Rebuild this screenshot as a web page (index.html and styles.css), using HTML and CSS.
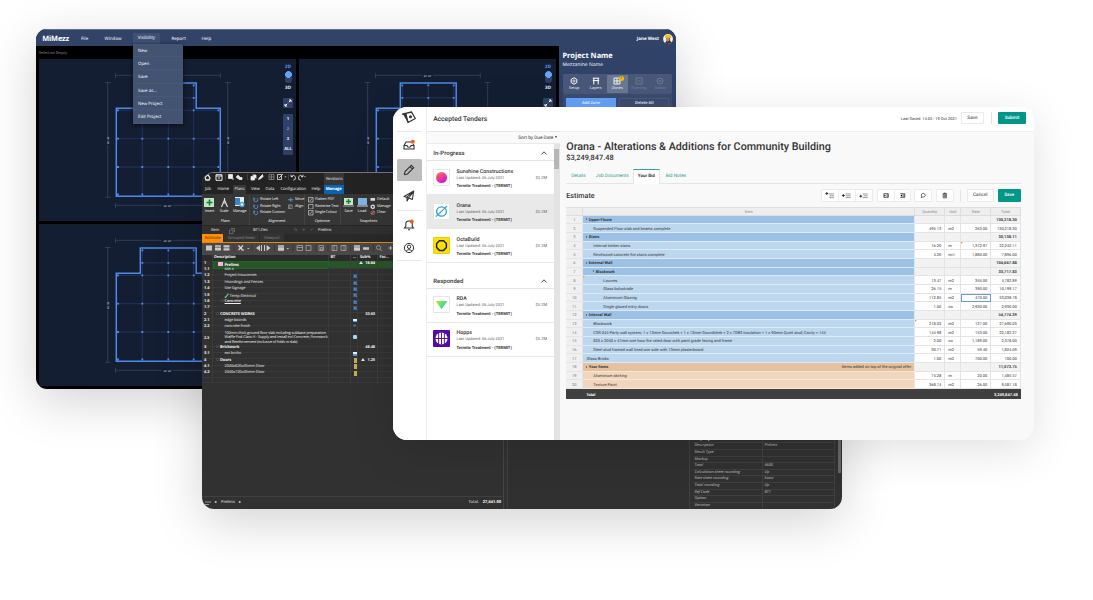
FILE: index.html
```
<!DOCTYPE html>
<html lang="en">
<head>
<meta charset="utf-8">
<title>Product suite</title>
<link rel="stylesheet" href="styles.css">
</head>
<body>
<svg class="defs" aria-hidden="true">
  <symbol id="plan" viewBox="0 0 257 162">
    <g stroke="#3d4a63" stroke-width=".7" fill="none">
      <path d="M76.5 16.3H123M134 16.3H181M76.5 14V19M181.3 14V19M76.5 146.3H123M134 146.3H181M76.5 144V149M181.3 144V149M68.7 23.5V76M68.7 86V138.3M66 23.5H71.5M66 138.3H71.5M188.7 23.5V76M188.7 86V138.3M186 23.5H191.5M186 138.3H191.5"/>
    </g>
    <g stroke="#22335a" stroke-width="1" fill="none">
      <path d="M103.3 26V136M129.3 26V136M154.7 26V136M103 38.8H155M78 51.3H180M78 79.7H180M78 108H180"/>
    </g>
    <path d="M101.3 24.1H157.2V49.3H181.3V137.3H77.3V49.3H101.3Z" fill="none" stroke="#4f8ae6" stroke-width="1.5"/>
    <path d="M103.3 26.3H103.31M129.3 26.3H129.31M154.7 26.3H154.71M103.3 38.8H103.31M129.3 38.8H129.31M154.7 38.8H154.71M79 51.3H79.01M103.3 51.3H103.31M129.3 51.3H129.31M154.7 51.3H154.71M179.3 51.3H179.31M79 79.7H79.01M103.3 79.7H103.31M129.3 79.7H129.31M154.7 79.7H154.71M179.3 79.7H179.31M79 108H79.01M103.3 108H103.31M129.3 108H129.31M154.7 108H154.71M179.3 108H179.31M79 135.5H79.01M103.3 135.5H103.31M129.3 135.5H129.31M154.7 135.5H154.71M179.3 135.5H179.31" stroke="#4f8fee" stroke-width="1.8" stroke-linecap="square"/>
    <g class="plan-label"><text x="124.5" y="17.5">40' 40"</text><text x="124.5" y="147.5">40' 40"</text><text transform="translate(69.7 85) rotate(-90)">40' 40"</text><text transform="translate(189.7 85) rotate(-90)">40' 40"</text></g>
  </symbol>
  <symbol id="expand" viewBox="0 0 10 10"><path d="M5.8 4.2L8 2M6 2h2v2M4.2 5.8L2 8M2 6v2h2" fill="none" stroke="#fff" stroke-width="1"/></symbol>
  <symbol id="up" viewBox="0 0 8 6"><path d="M1.6 4.3L4 1.8l2.4 2.5" fill="none" stroke="#333" stroke-width=".9"/></symbol>
  <symbol id="rot" viewBox="0 0 6 6"><path d="M1.6 1.3A2.2 2.2 0 1 0 4.4 1.2M1 .6v1.5h1.5" fill="none" stroke="#5f9fd0" stroke-width=".9"/></symbol>
  <symbol id="calc" viewBox="0 0 5 5"><rect x=".3" y=".3" width="4.4" height="4.4" fill="#2a5f92"/><path d="M.8 1.4h1.6M.8 3.6L4 1.2M2.8 3.7h1.4" stroke="#8fc6ef" stroke-width=".6"/></symbol>
</svg>

<main class="desktop">

<section class="window mezz">
  <header class="mezz-nav">
    <strong class="mezz-logo">MiMezz</strong>
    <nav class="mezz-menu">
      <span class="m-file">File</span><span class="m-window">Window</span>
      <div class="m-vis">Visibility
        <ul class="dropdown"><li>New</li><li>Open</li><li>Save</li><li>Save as...</li><li>New Project</li><li>Edit Project</li></ul>
      </div>
      <span class="m-report">Report</span><span>Help</span>
    </nav>
    <div class="mezz-user">Jane West
      <svg width="10" height="10" viewBox="0 0 10 10"><circle cx="5" cy="5" r="4.9" fill="#f3f3f3"/><path d="M2 9.2L3.4 7 3 4h4l.2 3L9 8.600Q5 11 2 9.200z" fill="#3b3531"/><ellipse cx="4.800" cy="5.300" rx="1.700" ry="2.300" fill="#c69070"/><path d="M1.800 3.700Q2 .300 5 .400T8.500 4z" fill="#f5bd16"/></svg>
    </div>
  </header>
  <div class="mezz-body">
    <div class="mezz-work">
      <div class="selection">Selection Empty</div>
      <div class="viewports">
        <div class="viewport"><svg class="plan"><use href="#plan"/></svg>
          <div class="controls"><b class="on">2D</b><i class="toggle"></i><b>3D</b><svg class="expand"><use href="#expand"/></svg><div class="levels"><b>1</b><b class="on">2</b><b>3</b><b>ALL</b></div></div></div>
        <div class="viewport"><svg class="plan"><use href="#plan"/></svg>
          <div class="controls"><b class="on">2D</b><i class="toggle"></i><b>3D</b><svg class="expand"><use href="#expand"/></svg></div></div>
        <div class="viewport"><svg class="plan"><use href="#plan"/></svg></div>
        <div class="viewport"><svg class="plan"><use href="#plan"/></svg></div>
      </div>
    </div>
    <aside class="mezz-side">
      <h2>Project Name</h2>
      <p>Mezzanine Name</p>
      <div class="side-tabs">
        <div><svg viewBox="0 0 8 8"><path d="M4 .8l2.800 1.600v3.200L4 7.200 1.200 5.600V2.400z" fill="none" stroke="#fff"/><circle cx="4" cy="4" r="1.100" fill="none" stroke="#fff" stroke-width=".7"/></svg>Setup</div>
        <div><svg viewBox="0 0 8 8"><path d="M.8 1.200h6.400M.8 3.600h6.400M1.800 1v6.400M6.200 1v6.400" stroke="#fff" fill="none"/></svg>Layers</div>
        <div class="active"><svg viewBox="0 0 8 8"><path d="M1 1h6v6H1zM4 1v6M1 4h6" stroke="#fff" stroke-width=".9" fill="none"/></svg><em class="badge">!</em>Zones</div>
        <div class="off"><svg viewBox="0 0 8 8"><path d="M1 1h6v6H1zM2.500 4h3" stroke="#fff" stroke-width=".8" fill="none"/></svg>Framing</div>
        <div class="off"><svg viewBox="0 0 8 8"><circle cx="4" cy="4" r="3" stroke="#fff" stroke-width=".8" fill="none"/><path d="M2.500 4h3" stroke="#fff"/></svg>Extras</div>
      </div>
      <div class="side-buttons"><span class="add">Add Zone</span><span>Delete All</span></div>
    </aside>
  </div>
</section>

<section class="window cost">
  <header class="cost-title">
    <svg width="120" height="14" viewBox="0 0 120 14">
      <g fill="#eee" stroke="#eee" stroke-width=".8">
        <path d="M3 4l3-2 2 3-1 2H4z" fill="none" stroke-width="1.300"/><path d="M14 1.700h6v5.600h-6zM14 3h6M16 5h2" fill="none" stroke-width="1"/>
        <path d="M26.500 1.500h4v4h-4zM30 6h2"/><circle cx="36" cy="4" r="1.400"/><path d="M37 4.500h3v2h-3z"/>
        <path d="M49 3.500h3.500v3.500H49zM50.500 2h3.500v3.500"/><path d="M56.500 6.500l1-2 3-3 .5 2-2 2z"/><path d="M67 1.500h5v5h-5zM67 4h5M69.500 1.500v5" fill="none" stroke="#888"/>
        <path d="M75.500 1.500h4v5h-4zM77 5l4-4" fill="none"/><path d="M82.500 3.500h2l-1 1z" stroke="none"/>
        <path d="M89 1.700v2h2M89.300 3.500q3-2.800 4 .4t-2 3.200M101 1.700v2h-2M100.700 3.500q-3-2.800-4 .4t2 3.200" fill="none"/><path d="M102 3.500h2l-1 1z" stroke="none"/>
      </g><path d="M23.500 1v6M45.500 1v6M86.500 1v6" stroke="#555" stroke-width=".6"/>
    </svg>
    <span class="revisions">Revisions</span>
  </header>
  <nav class="cost-tabs"><span>Job</span><span>Home</span><span class="current">Plans</span><span>View</span><span>Data</span><span>Configuration</span><span>Help</span><span class="manage">Manage</span></nav>
  <div class="ribbon">
    <div class="rg g-plans"><div class="tools big">
      <div><svg viewBox="0 0 11 11"><path d="M0 1h10v9H0z" fill="#bfe8c0"/><path d="M5.500 2.500v6M2.500 5.500h6" stroke="#177a3a" stroke-width="1.600"/></svg>Insert</div>
      <div><svg viewBox="0 0 11 11"><path d="M5.500 1v2L2.500 10M5.500 3l3 7M4 6h3" stroke="#ddd" fill="none" stroke-width="1.200"/></svg>Scale</div>
      <div><svg viewBox="0 0 11 11"><path d="M1 0h9v9H1z" fill="#e9eef2"/><path d="M1 1h5v7H1z" fill="#3e83bd"/><circle cx="8" cy="7.500" r="2" fill="none" stroke="#4ba1de" stroke-width="1.300"/></svg>Manage</div>
    </div><small>Plans</small></div>
    <div class="rg g-align"><div class="tools two">
      <div><span><svg><use href="#rot"/></svg>Rotate Left</span><span><svg><use href="#rot"/></svg>Rotate Right</span><span><svg><use href="#rot"/></svg>Rotate Custom</span></div>
      <div><span><svg viewBox="0 0 6 6"><path d="M0 3h6M3 .5v5" stroke="#5c9ac8"/></svg>Move</span><span><svg viewBox="0 0 6 6"><path d="M.5 1h4v4h-4zM2 1v4" stroke="#999" stroke-width=".8" fill="none"/></svg>Align</span></div>
    </div><small>Alignment</small></div>
    <div class="rg g-opt"><div class="tools one"><div>
      <span><svg class="check" viewBox="0 0 6 6"><path d="M.5.500h5v5h-5zM1.500 3l1 1 2-2.500"/></svg>Flatten PDF</span><span><svg class="check" viewBox="0 0 6 6"><path d="M.5.500h5v5h-5z"/></svg>Rasterise Text</span><span><svg class="check" viewBox="0 0 6 6"><path d="M.5.500h5v5h-5zM1.500 3l1 1 2-2.500"/></svg>Single Colour</span></div>
    </div><small>Optimise</small></div>
    <div class="rg g-snap"><div class="tools snap">
      <div class="bigbtn"><svg viewBox="0 0 11 11"><path d="M1 1h9v7H1z" fill="#c6e6c8"/><path d="M5.500 2v5M3 4.500h5" stroke="#177a3a" stroke-width="1.500"/><path d="M0 9h11" stroke="#aaa"/></svg>Save</div>
      <div class="bigbtn"><svg viewBox="0 0 11 11"><path d="M1 1h9v7H1z" fill="#7cb5e6"/><path d="M0 9h11" stroke="#ddd"/></svg>Load</div>
      <div class="stack"><span><svg viewBox="0 0 6 6"><path d="M.5 1h5v3h-5z" fill="#ddd"/></svg>Default</span><span><svg viewBox="0 0 6 6"><circle cx="3" cy="3" r="1.800" fill="none" stroke="#eee" stroke-width="1.300"/></svg>Manage</span><span><svg viewBox="0 0 6 6"><circle cx="3" cy="3" r="2" fill="none" stroke="#d45b53"/><path d="M1.500 4.500l3-3" stroke="#ddd" stroke-width=".7"/></svg>Clear</span></div>
    </div><small>Snapshots</small></div>
  </div>
  <div class="formula"><span>Item</span><svg viewBox="0 0 6 6"><path d="M.5 2h3.500v3.500H.5zM2 .5h3.500V4" stroke="#777" fill="none" stroke-width=".8"/></svg><span class="cell">BT1.Des</span><i>fx</i><i>✕</i><i>✓</i><span class="val">Prelims</span></div>
  <div class="doc-tabs"><span class="est">Estimate</span><span>Grouped Views</span><span>Viewport</span></div>
  <div class="sheet-tools"><svg width="190" height="12" viewBox="0 0 190 12">
    <g fill="#c9c9c9"><path d="M4 2.500h6v5H4zM13 2.200h6v1.600h-6zM13 4.500h6v3h-6zM21.500 2.200h6v2.300h-6zM21.500 5.300h6v2.300h-6z"/><path d="M45 5h2.500l-1.200 1.300z"/><path d="M54 5l4-3v6zM59 2h1v6h-1zM62 2h1v6h-1zM64.500 2l4 3-4 3z"/><path d="M76 2.200h6v1.500h-6zM76 4.200h6v3.500h-6zM84.500 5H87l-1.200 1.300zM152 2.200h6v1.500h-6zM152 4.200h6v3.500h-6zM161 4.200h6v2.600h-6z"/></g>
    <g fill="none" stroke="#a5a5a5" stroke-width=".8"><path stroke="#ddd" stroke-width="1.200" d="M36.500 2.500l4 4.500M41 2.500L36.500 7M39.500 7H42"/><path d="M95 2.500h5.500v5H95zM95 4.500h5.500M104 2.500h5v5h-5zM117 2.500h4.500v5H117zM118.500 4.500h2v2h-2zM130 2.500h5v5h-5zM132 2.500v5M139 2.500h5v5h-5zM142 2.500v5"/><circle cx="176.500" cy="4.500" r="2"/><path d="M178 6l1.800 2"/><path d="M188.500 3v4M186.500 5h4" stroke="#ccc"/></g>
    <path d="M32 1v8M50 1v8M72.500 1v8M91 1v8M114 1v8M126 1v8M148.500 1v8M171.500 1v8" stroke="#333" stroke-width=".7"/>
  </svg></div>
  <div class="cost-main">
    <div class="sheet">
      <div class="sr head"><span></span><span>Description</span><span>BT</span><span>...</span><span>Sub%</span><span>Fac...</span></div>
      <div class="sr green b"><span>1</span><span><i class="flag"></i>Prelims</span><span></span><span></span><span class="n"><u class="warn"></u>16.64</span><span></span></div>
      <div class="sr"><span>1.1</span><span>site a</span><span></span><span></span><span></span><span></span></div>
      <div class="sr"><span>1.2</span><span>Project Insurances</span><span></span><span><svg><use href="#calc"/></svg></span><span></span><span></span></div>
      <div class="sr"><span>1.3</span><span>Hoardings and Fences</span><span></span><span><svg><use href="#calc"/></svg></span><span></span><span></span></div>
      <div class="sr"><span>1.4</span><span>Site Signage</span><span></span><span><svg><use href="#calc"/></svg></span><span></span><span></span></div>
      <div class="sr"><span>1.5</span><span><svg class="brush" viewBox="0 0 6 6"><path d="M.8 4.500l1.200.9L5.300.8" fill="none" stroke="#6ad28c" stroke-width="1.300"/></svg>Temp Electrical</span><span></span><span><svg><use href="#calc"/></svg></span><span></span><span></span></div>
      <div class="sr"><span>1.6</span><span class="under"><i class="tw"></i>Concrete</span><span></span><span><svg><use href="#calc"/></svg></span><span></span><span></span></div>
      <div class="sr"><span>1.7</span><span></span><span></span><span><svg><use href="#calc"/></svg></span><span></span><span></span></div>
      <div class="sr b top"><span>2</span><span><i class="tw"></i>CONCRETE WORKS</span><span></span><span></span><span class="n">33.63</span><span></span></div>
      <div class="sr"><span>2.1</span><span>edge boards</span><span></span><span><i class="tray"></i></span><span></span><span></span></div>
      <div class="sr"><span>2.2</span><span>concrete finish</span><span></span><span class="blue">✕</span><span></span><span></span></div>
      <div class="sr tall"><span>2.3</span><span>100mm thick ground floor slab including subbase preparation<br>Waffle Pod Class H - Supply and install incl Concrete, Formwork<br>and Reinforcement (inclusive of folds in slab)</span><span></span><span><i class="cube"></i></span><span></span><span></span></div>
      <div class="sr b top"><span>3</span><span><i class="tw"></i>Brickwork</span><span></span><span></span><span class="n">48.48</span><span></span></div>
      <div class="sr"><span>3.1</span><span>ext bricks</span><span></span><span><i class="tray"></i></span><span></span><span></span></div>
      <div class="sr b top"><span>4</span><span><i class="tw"></i>Doors</span><span></span><span><i class="door"></i></span><span class="n"><u class="warn"></u>1.25</span><span></span></div>
      <div class="sr"><span>4.1</span><span>2040x820x35mm Door</span><span></span><span><i class="door"></i></span><span></span><span></span></div>
      <div class="sr"><span>4.2</span><span>2040x720x35mm Door</span><span></span><span><i class="door"></i></span><span></span><span></span></div>
      <div class="sr last"><span></span><span></span><span></span><span></span><span></span><span></span></div>
      <footer class="sheet-foot"><svg viewBox="0 0 6 5"><path d="M0 1h6M0 3.500h4" stroke="#999"/></svg><span>▸</span><span>Prelims</span><span>▸</span><span class="tot">Total:</span><b>27,641.00</b></footer>
    </div>
    <div class="middle"></div>
    <div class="props">
      <div class="pr ph"><span>Property</span><span>Value</span></div>
      <div class="pr"><span>Description</span><span>Prelims</span></div>
      <div class="pr"><span>Result Type</span><span></span></div>
      <div class="pr"><span>Markup</span><span></span></div>
      <div class="pr"><span>Total</span><span>4600</span></div>
      <div class="pr"><span>Calculation sheet rounding</span><span>Up</span></div>
      <div class="pr"><span>Rate sheet rounding</span><span>Exact</span></div>
      <div class="pr"><span>Total rounding</span><span>Up</span></div>
      <div class="pr"><span>Ref Code</span><span>BT1</span></div>
      <div class="pr"><span>Option</span><span></span></div>
      <div class="pr"><span>Variation</span><span></span></div>
    </div>
    <div class="track"></div>
  </div>
</section>

<section class="window tender">
  <nav class="rail">
    <div class="brand"><svg width="16" height="15" viewBox="0 0 16 15"><path d="M1.500 3.300L6.500 12l-1-7.500z" fill="#333"/><path d="M1.500 4.200L10.500 2l3.800 6.500L7 12.500 5 4.500z" fill="none" stroke="#333" stroke-width="1.300" stroke-linejoin="round"/><circle cx="9.500" cy="6.700" r="1.500" fill="#333"/></svg></div>
    <div class="ri"><svg viewBox="0 0 12 12"><path d="M1 6.500L3 3h5.500M1 6.500h3q0 1.800 2 1.800t2-1.800h3V10H1zM11 6.500L10 5" fill="none" stroke="#333" stroke-width="1.100"/><circle cx="9.800" cy="2.800" r="2" fill="#ff5a13"/></svg></div>
    <div class="ri active"><svg viewBox="0 0 12 12"><path d="M1.500 10.500l.5-3L8.300 1.300l2.400 2.400L4.500 10zM7 2.600l2.400 2.400" fill="none" stroke="#333" stroke-width="1.100"/></svg></div>
    <div class="ri send"><svg viewBox="0 0 12 12"><path d="M1 6.500L10.800 1 9.300 9.500 5.800 8zM4 7.200V11l1.800-3 5-7-6.800 6.200" fill="none" stroke="#333" stroke-width="1.100" stroke-linejoin="round"/></svg></div>
    <div class="ri bell"><svg viewBox="0 0 12 12"><path d="M1.500 9h9L9.300 7.300V5q0-3-3.300-3T2.800 5v2.300zM5 10.700h2" fill="none" stroke="#333" stroke-width="1.100"/><circle cx="8.700" cy="2.500" r="2" fill="#ff5a13"/></svg></div>
    <div class="ri user"><svg viewBox="0 0 12 12"><circle cx="6" cy="6" r="4.600" fill="none" stroke="#333"/><circle cx="6" cy="4.800" r="1.700" fill="none" stroke="#333"/><path d="M3 9.300q3-3.300 6 0" fill="none" stroke="#333"/></svg></div>
  </nav>
  <div class="list">
    <h2>Accepted Tenders</h2>
    <div class="sort">Sort by Due Date <i></i></div>
    <div class="scroll">
      <div class="cards">
        <div class="group">In-Progress<svg><use href="#up"/></svg></div>
        <article class="card"><svg class="logo" viewBox="0 0 16 16"><defs><linearGradient id="sun" x1="0" y1="0" x2=".6" y2="1"><stop stop-color="#ff7a3c"/><stop offset="1" stop-color="#d411dc"/></linearGradient></defs><circle cx="8" cy="8" r="5.900" fill="url(#sun)"/></svg><div><h3>Sunshine Constructions</h3><p>Last Updated: 06 July 2021</p><b>Termite Treatment - (TERMIT)</b></div><span>$3.2M</span></article>
        <article class="card selected"><svg class="logo" viewBox="0 0 16 16"><ellipse cx="8" cy="8" rx="5.200" ry="4.900" fill="none" stroke="#2ba4cc" stroke-width="1.400"/><path d="M2 13.500L14 2" stroke="#2ba4cc" stroke-width="1.300"/></svg><div><h3>Orana</h3><p>Last Updated: 06 July 2021</p><b>Termite Treatment - (TERMIT)</b></div><span>$3.2M</span></article>
        <article class="card"><svg class="logo yellow" viewBox="0 0 16 16"><path d="M5.800 2.800h4.400l3 3v4.400l-3 3H5.800l-3-3V5.800z" fill="none" stroke="#222" stroke-width="1.600"/></svg><div><h3>OctaBuild</h3><p>Last Updated: 06 July 2021</p><b>Termite Treatment - (TERMIT)</b></div><span>$3.2M</span></article>
        <div class="group responded">Responded<svg><use href="#up"/></svg></div>
        <article class="card"><svg class="logo" viewBox="0 0 16 16"><defs><linearGradient id="rda" x1="0" x2="1" y1="0" y2=".5"><stop stop-color="#c5e929"/><stop offset="1" stop-color="#16dca5"/></linearGradient></defs><path d="M1.700 4.200h12.600L8 13z" fill="url(#rda)"/></svg><div><h3>RDA</h3><p>Last Updated: 06 July 2021</p><b>Termite Treatment - (TERMIT)</b></div><span>$3.2M</span></article>
        <article class="card"><svg class="logo purple" viewBox="0 0 16 16"><circle cx="8" cy="8" r="5.700" fill="#fff"/><path d="M8 2v12M2 8h12M5.300 2v12M10.700 2v12" stroke="#560aa5" stroke-width=".9"/></svg><div><h3>Hopps</h3><p>Last Updated: 06 July 2021</p><b>Termite Treatment - (TERMIT)</b></div><span>$3.2M</span></article>
      </div>
      <div class="bar"><i></i></div>
    </div>
  </div>
  <div class="bid">
    <header class="bid-top"><span class="saved">Last Saved: 14:05 - 19 Oct 2021</span><span class="btn">Save</span><i class="sep"></i><span class="btn primary submit">Submit</span></header>
    <h1>Orana - Alterations &amp; Additions for Community Building</h1>
    <div class="price">$3,249,847.48</div>
    <nav class="tabs"><span>Details</span><span>Job Documents</span><span class="sel">Your Bid</span><span>Bid Notes</span></nav>
    <div class="est-bar"><h2>Estimate</h2>
      <div class="set"><svg viewBox="0 0 17 12"><path d="M3.500 3.800h3M5 2.300v3" stroke="#222"/><path d="M7 4.300h6M8 6.300h5M8 8.300h5" stroke="#777" stroke-width=".8"/></svg><svg viewBox="0 0 17 12"><path d="M3 6h3M4.500 4.500v3" stroke="#222"/><path d="M7 4.300h5.500M7 6.300h5.500M7 8.300h5.500" stroke="#777" stroke-width=".8"/></svg><svg viewBox="0 0 17 12"><path d="M3.500 6.800h3M5 5.300v3" stroke="#222"/><path d="M7 4.300h5.500M8 6.300h4.500M7 8.300h5.500" stroke="#777" stroke-width=".8"/></svg></div>
      <div class="set"><svg viewBox="0 0 16 12"><path d="M5.500 4h5M8.500 5.300h2M8.500 6.700h2M5.500 8h5M5.700 4v4M10.500 4v4" stroke="#333" stroke-width=".8"/><path d="M6.300 4.800l1.600 1.200-1.600 1.200z"/></svg><svg viewBox="0 0 16 12"><path d="M5.500 4h5M8.500 5.300h2M8.500 6.700h2M5.500 8h5M10.500 4v4" stroke="#333" stroke-width=".8"/><path d="M7.800 4.500L5.800 6l2 1.500z"/></svg></div>
      <div class="set"><svg viewBox="0 0 17 12"><path d="M6.500 8.300l.4-1.300Q6 5 7.500 4.100t3 .4q1.300 1.700-.4 2.800-.8.500-2 .3z" fill="none" stroke="#333" stroke-width=".8"/></svg></div>
      <div class="set"><svg viewBox="0 0 17 12"><path d="M6 4h4.500M7.500 3.300h1.500M6.500 4.500h3.500V8.600H6.500zM7.700 5.300v2.500M8.900 5.300v2.500" fill="none" stroke="#333" stroke-width=".8"/></svg></div>
      <i class="sep"></i><span class="btn cancel">Cancel</span><span class="btn primary save2">Save</span>
    </div>
    <table class="grid">
      <colgroup><col class="c1"><col class="c2"><col class="c3"><col class="c4"><col class="c5"><col class="c6"></colgroup>
      <thead><tr><th></th><th>Item</th><th>Quantity</th><th>Unit</th><th>Rate</th><th>Total</th></tr></thead>
      <tbody>
        <tr class="g"><td>1</td><td>Upper Floors</td><td></td><td></td><td></td><td>130,218.30</td></tr>
        <tr><td>2</td><td>Suspended Floor slab and beams complete</td><td>495.13</td><td>m2</td><td>263.00</td><td>130,218.30</td></tr>
        <tr class="g"><td>3</td><td>Stairs</td><td></td><td></td><td></td><td>30,138.11</td></tr>
        <tr><td>4</td><td>Internal timber stairs</td><td>16.20</td><td>m</td><td class="note">1,372.97</td><td>22,242.11</td></tr>
        <tr><td>5</td><td>Reinforced concrete fire stairs complete</td><td>4.20</td><td>m/r</td><td>1,880.00</td><td>7,896.00</td></tr>
        <tr class="g"><td>6</td><td>External Wall</td><td></td><td></td><td></td><td>104,667.88</td></tr>
        <tr class="g in"><td>7</td><td>Blockwork</td><td></td><td></td><td></td><td>33,717.83</td></tr>
        <tr class="deep"><td>8</td><td class="note">Louvres</td><td>13.47</td><td>m2</td><td>355.00</td><td>4,782.89</td></tr>
        <tr class="deep"><td>9</td><td>Glass balustrade</td><td>26.15</td><td>m</td><td>390.00</td><td>10,199.17</td></tr>
        <tr class="deep"><td>10</td><td>Aluminium Glazing</td><td>112.85</td><td>m2</td><td class="focus">470.00</td><td>53,038.78</td></tr>
        <tr class="deep"><td>11</td><td>Single glazed entry doors</td><td>1.00</td><td>no</td><td>2,930.00</td><td>2,930.00</td></tr>
        <tr class="g"><td>12</td><td>Internal Wall</td><td></td><td></td><td></td><td>54,774.39</td></tr>
        <tr><td>13</td><td>Blockwork</td><td class="note">218.03</td><td>m2</td><td>127.00</td><td>27,690.03</td></tr>
        <tr><td>14</td><td>CSR 044 Party wall system; 1 x 13mm Sounchek + 1 x 13mm Soundchek + 2 x TSB3 Insulation + 1 x 90mm Quiet stud; Cavity = 144</td><td>144.98</td><td>m2</td><td>153.00</td><td>22,182.27</td></tr>
        <tr><td>15</td><td>820 x 2040 x 47mm one hour fire rated door with paint grade facing and frame</td><td>2.00</td><td>no</td><td>1,189.00</td><td>2,378.00</td></tr>
        <tr><td>16</td><td>Steel stud framed wall lined one side with 13mm plasterboard</td><td>30.71</td><td>m2</td><td>59.40</td><td>1,824.09</td></tr>
        <tr class="flat"><td>17</td><td>Glass Bricks</td><td>1.00</td><td>m2</td><td>700.00</td><td>700.00</td></tr>
        <tr class="g o"><td>18</td><td>Your Items<span>Items added on top of the original offer</span></td><td></td><td></td><td></td><td>11,072.75</td></tr>
        <tr class="o"><td>19</td><td>Aluminium skirting</td><td>74.28</td><td>m</td><td>20.00</td><td>1,485.57</td></tr>
        <tr class="o"><td>20</td><td>Texture Paint</td><td>368.74</td><td>m2</td><td>26.00</td><td>9,587.18</td></tr>
      </tbody>
      <tfoot><tr><td></td><td>Total</td><td></td><td></td><td></td><td>3,249,847.48</td></tr></tfoot>
    </table>
  </div>
</section>
</main>
</body>
</html>
```
FILE: styles.css
```
* { box-sizing: border-box; }
body { margin: 0; background: #fff; overflow: hidden; text-rendering: geometricPrecision; }
h1, h2, h3, p, ul { margin: 0; padding: 0; font-weight: inherit; }
ul { list-style: none; }
i, em { font-style: normal; }
svg { display: block; flex: none; }
.defs { display: none; }
.desktop { position: relative; width: 1093px; height: 600px; overflow: hidden; }
.window { position: absolute; display: flex; overflow: hidden; box-shadow: 0 12px 50px rgba(0,0,0,.18); white-space: nowrap; }

/* Mezzanine designer */
.mezz { left: 36px; top: 29px; width: 640px; height: 360px; border-radius: 11px; background: #000; flex-direction: column; font: 4.500px/6px "Noto Sans", sans-serif; color: #eef2f9; }
.mezz-nav { height: 17px; flex: none; background: #314367; display: flex; align-items: center; padding: 1px 3.5px 0 6.200px; border-top: 1px solid #62708b; }
.mezz-logo { font-size: 7.400px; width: 38.800px; color: #fff; letter-spacing: -.15px; }
.mezz-menu { display: flex; align-items: center; }
.m-file { width: 23.500px; }
.m-window { width: 28.500px; }
.m-vis { position: relative; width: 27.500px; height: 10.500px; line-height: 10.500px; padding-left: 4.800px; background: #3f5077; border-radius: 1px 1px 0 0; margin-right: 11px; }
.m-report { width: 30px; }
.dropdown { position: absolute; z-index: 2; left: 0; top: 10.500px; width: 50px; background: #435372; border-radius: 0 2px 2px 2px; box-shadow: 0 1px 4px rgba(0,0,0,.7); font-size: 4.400px; color: #f1f4fa; }
.dropdown li { height: 13.350px; line-height: 15px; padding-left: 5px; border-bottom: 1px solid #485876; }
.mezz-user { margin-left: auto; display: flex; align-items: center; gap: 3.500px; font-weight: 700; font-size: 4.500px; color: #fff; }
.mezz-body { flex: 1; display: flex; min-height: 0; }
.mezz-work { width: 523px; padding-left: 3px; }
.selection { height: 13px; line-height: 15px; font-size: 3.750px; color: #888; }
.viewports { display: grid; grid-template-columns: 257px 257px; grid-template-rows: 162px 162px; gap: 3px; }
.viewport { display: grid; background: #141e32; }
.plan { grid-area: 1/1; width: 257px; height: 162px; }
.plan-label { font: 700 2.600px "Noto Sans", sans-serif; fill: #a8b0c0; }
.controls { grid-area: 1/1; justify-self: end; width: 10px; margin: 4.500px 3px 0 0; display: flex; flex-direction: column; align-items: center; font-size: 4.500px; line-height: 6px; }
.controls .on { color: #5b9af5; }
.toggle { width: 7px; height: 12.500px; border-radius: 4px; margin: 1px 0 2px; background: radial-gradient(circle at 3.500px 3.500px, #65a2fb 3.200px, #2f4166 3.600px); }
.expand { width: 10px; height: 10px; background: #2f4166; border-radius: 1px; margin-top: 7px; }
.levels { width: 10px; height: 41px; margin-top: 6px; background: #2f4166; border-radius: 1px; display: grid; text-align: center; align-items: center; font-size: 4.200px; padding-top: 1px; }
.mezz-side { width: 117px; background: #304267; padding: 4.500px 4px 0 3.500px; }
.mezz-side h2 { font: 700 7.450px/11px "Noto Sans", sans-serif; color: #fff; }
.mezz-side p { font-size: 5px; line-height: 6px; }
.side-tabs { height: 20.500px; margin-top: 6px; background: #495879; border-radius: 2px; display: grid; grid-template-columns: repeat(5, 1fr); padding: 1.500px 1px; text-align: center; font-size: 3.900px; line-height: 6px; }
.side-tabs div { position: relative; padding-top: 1.500px; }
.side-tabs svg { width: 8px; height: 8px; margin: 0 auto 1px; }
.side-tabs .active { background: #6b7892; border-radius: 1px; }
.side-tabs .off { opacity: .25; }
.badge { position: absolute; left: 12px; top: 1px; width: 5px; height: 5px; border-radius: 50%; background: #f8bd08; color: #333; font-weight: 700; font-size: 3.500px; line-height: 5px; }
.side-buttons { display: grid; grid-template-columns: 50px 50px; gap: 3.300px; padding: 3.500px 3.500px; background: #3c4c70; height: 30px; text-align: center; font-size: 3.950px; font-weight: 600; }
.side-buttons span { height: 10.500px; border: 1px solid #4a597b; line-height: 9.500px; }
.side-buttons .add { background: #65a2fb; border-color: #65a2fb; }

/* Estimating workbench */
.cost { left: 202px; top: 172px; width: 640px; height: 336.500px; border-radius: 12px; background: #313131; flex-direction: column; font: 4px/6px "Open Sans", sans-serif; letter-spacing: -.1px; color: #f0f0f0; border-top: 1px solid #777; }
.cost-title { height: 12px; flex: none; display: flex; background: #232323; }
.revisions { margin-left: 1.500px; padding: 4px 0 0 2.500px; width: 20.500px; background: #363636; }
.cost-tabs { height: 9px; flex: none; display: flex; padding-left: 3px; background: #232323; font-size: 4.200px; line-height: 10px; }
.cost-tabs span:nth-child(1) { width: 12.500px; }
.cost-tabs span:nth-child(2) { width: 15px; }
.cost-tabs .current { width: 13.500px; padding-left: 2px; background: #363636; margin-right: 5px; }
.cost-tabs span:nth-child(4) { width: 14.500px; }
.cost-tabs span:nth-child(5) { width: 15px; }
.cost-tabs span:nth-child(6) { width: 31px; }
.cost-tabs span:nth-child(7) { width: 12.500px; }
.cost-tabs .manage { width: 19.500px; text-align: center; background: #0963b0; font-weight: 700; color: #fff; }
.ribbon { height: 31px; flex: none; display: flex; background: #363636; font-size: 3.850px; letter-spacing: -.12px; }
.rg { border-right: 1px solid #444; display: flex; flex-direction: column; justify-content: space-between; margin: 1px 0 0; height: 30px; }
.rg small { font-size: 3.850px; text-align: center; }
.g-plans { width: 47.500px; }
.g-align { width: 55.500px; }
.g-opt { width: 35.500px; }
.g-snap { width: 56px; border: 0; }
.tools { display: flex; padding-top: 1.700px; }
.big { padding-left: 2px; gap: 3.500px; }
.big div, .bigbtn { text-align: center; min-width: 10px; }
.big svg, .bigbtn svg { width: 11px; height: 11px; margin: 0 auto 1px; }
.two { padding-left: 3.500px; gap: 3px; }
.one { padding-left: 3px; }
.snap { padding-left: 2.500px; gap: 2.500px; }
.two span, .one span, .stack span { display: flex; gap: 1.500px; align-items: center; height: 6.600px; }
.two svg, .one svg, .stack svg { width: 5.500px; height: 5.500px; }
.check { fill: none; stroke: #ddd; stroke-width: .7; }
.formula { height: 9px; flex: none; display: flex; align-items: center; background: #303030; border-top: 1px solid #262626; padding: 1px 0 0 9px; }
.formula svg { width: 6px; height: 6px; margin: 0 18px 0 10px; }
.formula .cell { width: 41px; }
.formula i { width: 8px; color: #777; }
.doc-tabs { height: 9px; flex: none; display: flex; gap: 1px; background: #292929; border-bottom: 1px solid #e98517; line-height: 9px; font-size: 4px; color: #888; }
.doc-tabs span { padding: 0 4px; background: #333; }
.doc-tabs .est { width: 21px; padding: 0 3px; background: #ff8d08; color: #4c2b00; }
.sheet-tools { height: 11.500px; flex: none; background: #484848; overflow: hidden; }
.cost-main { flex: 1; min-height: 0; display: flex; }
.sheet { width: 302px; display: flex; flex-direction: column; border-right: 1px solid #444; }
.sr { display: grid; grid-template-columns: 11px 115.500px 22.500px 7px 19.500px 1fr; height: 6.350px; flex: none; line-height: 6.800px; font-size: 3.950px; letter-spacing: -.1px; }
.sr > span { border-right: 1px solid #3b3b3b; border-bottom: 1px solid #393939; padding-left: 2px; }
.sr > span:first-child { font-weight: 700; }
.sr > span:nth-child(2) { padding-left: 11.500px; }
.sr > span:nth-child(2) i { display: inline-block; }
.sr svg { width: 4.500px; height: 4.500px; }
.sr svg, .tray, .cube, .door { margin: .7px 0 0 -.3px; }
.sr .brush { display: inline-block; width: 5px; height: 5px; margin: 0 1px 0 -1px; vertical-align: middle; }
.sr.head { height: 6.300px; font-weight: 700; background: #2b2b2b; }
.sr.head > span:nth-child(2) { padding-left: 1px; }
.sr.b { font-weight: 700; }
.sr.top > span:nth-child(2) { padding-left: 3px; }
.sr.green > span:not(:first-child) { background: #285429; color: #fff; }
.sr.green > span:nth-child(2) { padding-left: 4px; border: 1px solid #1a681f; line-height: 4.800px; }
.flag { width: 5px; height: 4px; background: #f6b4e6; margin-right: 1.500px; vertical-align: -.5px; }
.tw { width: 3px; height: 3px; border: 1px solid #444; margin-right: 1px; vertical-align: 0; }
.sr > .under { text-decoration: underline; font-weight: 600; }
.sr > span.under:nth-child(2) { padding-left: 7.500px; }
.sr .n { text-align: right; padding: 0 1.500px 0 0; }
.warn { display: inline-block; border: 2px solid transparent; border-top: 0; border-bottom: 3.500px solid #ddd; margin-right: 2.500px; }
.tray, .cube, .door { display: block; width: 4px; height: 3.500px; background: linear-gradient(#e6f2fa 55%, #4f9bd0 55%); }
.cube { height: 4px; margin-top: 4px; background: #a4d7f2; border-radius: 1px; }
.door { width: 3px; height: 5px; background: #c9aa54; margin: .3px 0 0 .5px; }
.blue { color: #4f9bd0; font-weight: 700; }
.sr.tall { height: 14.500px; line-height: 4.500px; font-size: 3.820px; letter-spacing: -.14px; }
.sr.tall > span:nth-child(2) { padding-top: 1px; }
.sr.tall > span:first-child { line-height: 15px; }
.sheet-foot { margin-top: auto; height: 13px; border-top: 1px solid #404040; display: flex; align-items: center; gap: 4px; padding: 1px 2px 0 3px; letter-spacing: 0; }
.sheet-foot svg { width: 6px; height: 5px; }
.sheet-foot .tot { margin-left: auto; }
.sheet-foot b { color: #fff; }
.middle { width: 183px; margin-left: 3px; border: solid #404040; border-width: 0 1px; background: #303030; }
.props { align-self: end; width: 142px; margin: 0 0 -1.200px 3px; font-style: italic; letter-spacing: 0; font-size: 3.850px; color: #c4c4c4; }
.pr { display: grid; grid-template-columns: 70px 1fr; height: 6.650px; border-bottom: 1px solid #3f3f3f; line-height: 6.800px; }
.pr span { padding-left: 1.500px; border-right: 1px solid #404040; }
.ph { font-weight: 700; color: #ddd; }
.track { width: 3px; height: 218px; margin-left: 3px; background: #666; }

/* Tender manager */
.tender { left: 393px; top: 107px; width: 640.500px; height: 332.500px; border-radius: 14px; background: #f9f9f9; font-family: Roboto, sans-serif; color: #333; box-shadow: 0 10px 45px rgba(0,0,0,.12); }
.rail { width: 33.500px; background: #fff; border-right: 1px solid #eee; padding: 0 3.500px; }
.brand { height: 24.500px; border-bottom: 1px solid #e9e9e9; display: grid; place-items: center; padding-bottom: 2px; }
.ri { height: 22px; display: grid; place-items: center; }
.ri svg { width: 12px; height: 12px; }
.ri:nth-child(2) { height: 27.500px; }
.ri.active { background: #bdbdbd; border-radius: 1.500px; }
.ri.send { height: 30px; border-bottom: 1px solid #e9e9e9; }
.ri.bell { height: 27px; }
.ri.user { height: 23px; padding-bottom: 3px; border-bottom: 1px solid #e9e9e9; }
.list { width: 133px; background: #fff; display: flex; flex-direction: column; }
.list h2 { flex: none; height: 24.500px; border-bottom: 1px solid #e9e9e9; padding-left: 6.700px; font: 500 6.700px/25px Roboto, sans-serif; }
.sort { height: 12.500px; flex: none; background: #fafafa; border-bottom: 1px solid #eaeaea; text-align: right; padding-right: 3px; font-size: 4.730px; line-height: 14px; }
.sort i { display: inline-block; border: 1.400px solid transparent; border-top: 2px solid #333; border-bottom: 0; vertical-align: 1px; }
.scroll { flex: 1; display: flex; }
.cards { width: 127.500px; }
.bar { width: 6px; background: #e3e3e3; padding: 5px .5px 0; }
.bar i { display: block; height: 20px; background: #b6b6b6; }
.group { height: 17px; display: flex; align-items: center; justify-content: space-between; padding: 2px 6px 0 6.700px; font-weight: 500; font-size: 5.950px; border-bottom: 1px solid #e5e5e5; letter-spacing: .05px; }
.group svg { width: 8px; height: 6px; }
.responded { height: 25.500px; padding-top: 11.500px; }
.card { height: 34px; display: flex; padding: 0 6.500px 0 6.500px; border-bottom: 1px solid #e9e9e9; }
.card.selected { background: #e9e9e9; }
.logo { width: 17px; height: 17px; margin: 7.500px 6.500px 0 0; background: #fff; border: 1px solid #e5e5e5; border-radius: 1px; }
.yellow { background: #ffe000; border-color: #e8ce10; }
.purple { background: #560aa5; border: 0; }
.card h3 { font: 500 5.320px/6px Roboto, sans-serif; margin-top: 7.500px; }
.card p { font-size: 3.970px; line-height: 6.500px; color: #666; }
.card b { display: block; font-size: 4.080px; line-height: 5px; margin-top: 2px; }
.card > span { margin: 14.500px 0 0 auto; font-size: 4.100px; color: #666; line-height: 6px; }
.bid { width: 474px; padding: 0 12.500px 0 6.800px; }
.bid-top { height: 24.500px; background: #fff; margin: 0 -12.500px 0 -6.800px; padding-right: 7.500px; border-bottom: 1px solid #f0f0f0; display: flex; align-items: center; justify-content: flex-end; padding-bottom: 1px; }
.saved { font-size: 4px; margin-right: 4px; }
.btn { width: 23px; height: 12px; background: #fff; border: 1px solid #eaeaea; border-radius: 1px; text-align: center; font-size: 4.800px; line-height: 12px; }
.sep { width: 1px; height: 12px; background: #e3e3e3; margin: 0 6.500px; }
.btn.primary { background: #009688; border: 0; color: #fff; font-weight: 500; font-size: 4.600px; line-height: 13.500px; }
.submit { width: 28px; }
.bid h1 { font: 500 10.760px/13px Roboto, sans-serif; margin-top: 8px; }
.price { font: 500 7.400px/10px Roboto, sans-serif; }
.tabs { height: 15px; margin-top: 6.500px; border-bottom: 1px solid #e5e5e5; display: flex; font-size: 4.700px; line-height: 16.500px; color: #1f9d91; padding-left: 5px; }
.tabs span:nth-child(1) { width: 24.500px; }
.tabs span:nth-child(2) { width: 37px; }
.tabs .sel { width: 27px; height: 15px; margin-right: 6px; background: #fff; text-align: center; color: #333; font-weight: 700; border: 1px solid #e5e5e5; border-top: 1px solid #36a69c; border-bottom: 0; line-height: 14.500px; font-size: 4.500px; }
.est-bar { height: 23.500px; display: flex; align-items: center; padding-bottom: .5px; }
.est-bar h2 { font-size: 7.200px; font-weight: 500; margin-right: auto; }
.set { display: flex; height: 12.500px; background: #fff; border: 1px solid #ebebeb; border-radius: 1px; margin-right: 3.500px; }
.set:nth-of-type(4) { margin-right: 0; }
.set svg { width: 16px; height: 11px; }
.set:nth-of-type(2) svg { width: 16px; }
.set svg + svg { width: 17px; border-left: 1px solid #eee; }
.est-bar .sep { margin: 0 6px; }
.cancel { width: 27.500px; margin-right: 3.500px; height: 12.500px; }
.save2 { width: 23.500px; height: 12.500px; }
.grid { width: 454.500px; table-layout: fixed; border-collapse: separate; border-spacing: 0; margin-top: -1px; font-size: 4.020px; line-height: 7px; }
.c1 { width: 17px; } .c2 { width: 332px; } .c3 { width: 30px; } .c4 { width: 16px; } .c5 { width: 30px; } .c6 { width: 29.500px; }
.grid th { height: 9px; padding: 0; background: #eee; font-weight: 400; color: #888; border: solid #dedede; border-width: 1px 1px 1px 0; }
.grid td { height: 8.680px; padding: 0 3px; border: solid #e4e4e4; border-width: 0 1px 1px 0; background: #fff; text-align: right; position: relative; }
.grid td:first-child { background: #f0f0f0; text-align: center; color: #777; padding: 0; }
.grid td:nth-child(2) { background: #bdd7ee; text-align: left; padding-left: 10px; border-color: #dceaf6; }
.grid td:nth-child(4) { text-align: left; }
.grid .g td { background: #f2f2f2; font-weight: 700; }
.grid .g td:first-child { background: #f0f0f0; font-weight: 400; }
.grid .g td:nth-child(2) { background: #9bc2e6; padding-left: 3px; }
.grid .g td:nth-child(2)::before { content: ""; display: inline-block; border: 1px solid transparent; border-left: 1.800px solid #222; border-right: 0; margin-right: 1.500px; vertical-align: .5px; }
.grid .g.in td:nth-child(2) { padding-left: 10px; }
.grid .deep td:nth-child(2) { padding-left: 20px; }
.grid .flat td:nth-child(2) { padding-left: 3.500px; }
.grid .o td:nth-child(2) { background: #f0d6bd; border-color: #f7e7d8; }
.grid .g.o td:nth-child(2) { background: #e5c19e; }
.grid .o span { float: right; font-weight: 400; }
.grid td.focus { outline: 1px solid #6f94ee; outline-offset: -1px; }
.note::after { content: ""; position: absolute; left: 0; top: 0; border: 1px solid #ee9d3f; border-right-color: transparent; border-bottom-color: transparent; }
.grid tfoot td, .grid tfoot td:nth-child(n) { height: 10.500px; background: #404040; color: #fff; font-weight: 700; border: 0; padding-left: 3px; }
.grid tfoot td:last-child { padding-left: 0; }
```
